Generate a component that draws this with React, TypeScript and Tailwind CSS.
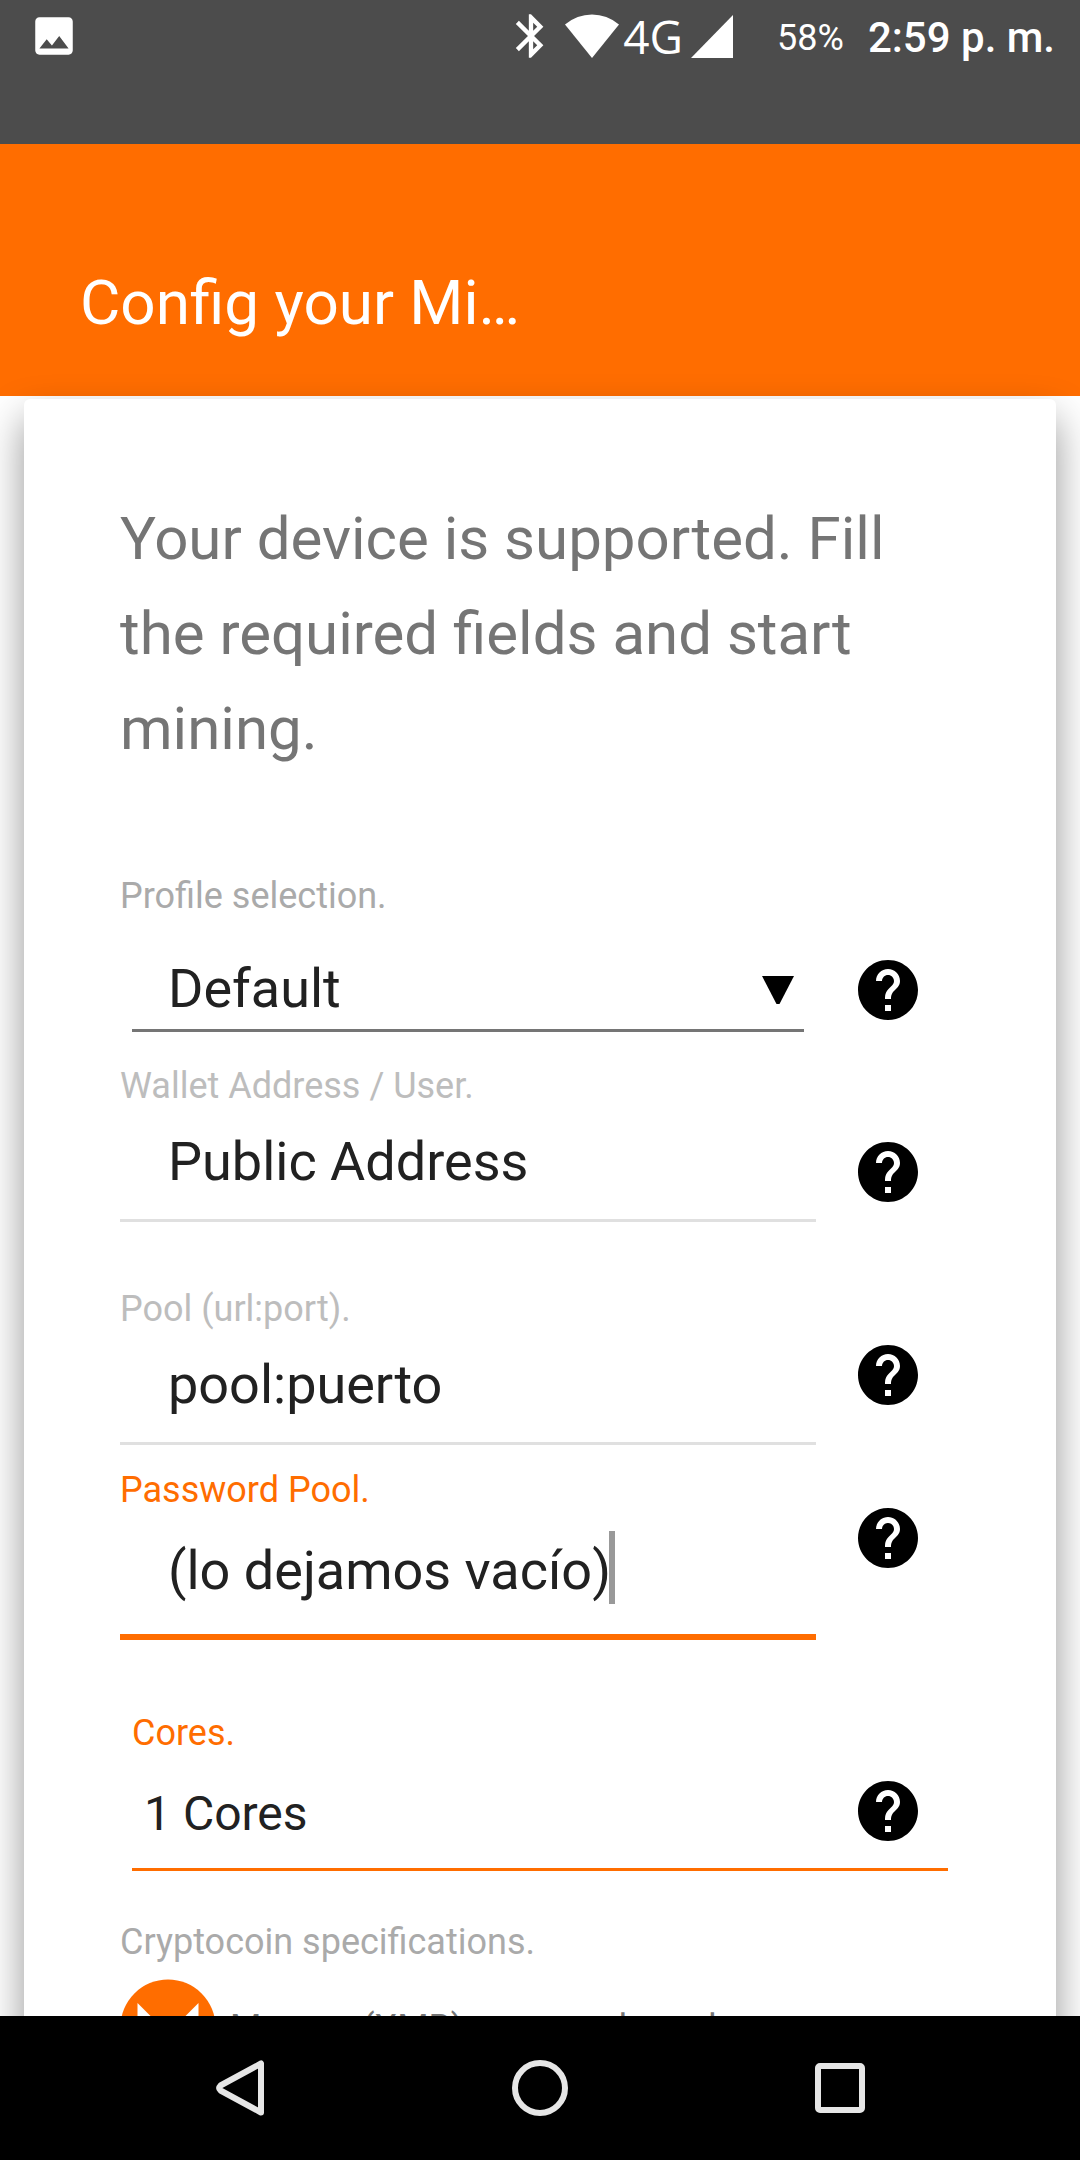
import type { ReactNode } from 'react';
import { MdBluetooth, MdHelp, MdImage } from 'react-icons/md';

const HelpButton = ({ label, className }: { label: string; className: string }) => (
	<button type="button" aria-label={`Help: ${label}`} className={`size-18 shrink-0 ${className}`}>
		<MdHelp className="size-full text-black" />
	</button>
);

type FieldProps = {
	id: string;
	label: string;
	labelColor: string;
	helpClass: string;
	className: string;
	children: ReactNode;
};

const Field = ({ id, label, labelColor, helpClass, className, children }: FieldProps) => (
	<div className={`flex items-end ${className}`}>
		<div className="min-w-0 flex-1">
			<label htmlFor={id} className={`block text-[36px] leading-12 ${labelColor}`}>
				{label}
			</label>
			{children}
		</div>
		<HelpButton label={label} className={helpClass} />
	</div>
);

const StatusBar = () => (
	<header className="h-36 shrink-0 bg-[#4c4c4c] text-white">
		<div className="flex h-18 items-center pr-[25px] pl-[29px]">
			<MdImage className="size-[50px]" />
			<MdBluetooth className="ml-auto size-[52px]" />
			<svg viewBox="0 0 54 44" className="ml-2 h-11 w-[54px]" fill="currentColor">
				<path d="M27 44L0 10.500Q12 .5 27 .5T54 10.500z" />
			</svg>
			<span className="ml-1 font-['Open_Sans'] text-[46px] leading-12">4G</span>
			<svg viewBox="0 0 42 43" className="ml-2 h-[43px] w-[42px]" fill="currentColor">
				<path d="M42 0V43H0z" />
			</svg>
			<div className="ml-11 flex items-center gap-6 pt-1 leading-12">
				<span className="text-[36px]">58%</span>
				<span className="text-[42px] font-medium">2:59 p. m.</span>
			</div>
		</div>
	</header>
);

const NavBar = () => (
	<nav className="relative z-10 flex h-36 shrink-0 items-center justify-around bg-black px-[90px]">
		<button type="button" aria-label="Back" className="size-14">
			<svg viewBox="0 0 56 56" fill="none" stroke="#e6e6e6" strokeWidth="6" strokeLinejoin="round">
				<path d="M49 3.500V52.500L8.500 30.500Q6 28 8.500 25.500z" />
			</svg>
		</button>
		<button type="button" aria-label="Home" className="size-14">
			<svg viewBox="0 0 56 56" fill="none" stroke="#e6e6e6" strokeWidth="6">
				<circle cx="28" cy="28" r="25" />
			</svg>
		</button>
		<button type="button" aria-label="Recent apps" className="size-14">
			<svg viewBox="0 0 56 56" fill="none" stroke="#e6e6e6" strokeWidth="6">
				<rect x="6" y="6" width="44" height="44" rx="2" />
			</svg>
		</button>
	</nav>
);

const inputClass =
	'block h-28 w-full border-b-3 border-[#e0e0e0] bg-transparent pb-1.5 pl-12 text-[54px] text-[#212121] outline-none';

export default function App() {
	return (
		<div className="flex h-screen flex-col overflow-hidden bg-white font-[Roboto,sans-serif]">
			<StatusBar />
			<div className="flex h-63 shrink-0 items-end bg-[#ff6d00] px-20 pb-[57px]">
				<h1 className="text-[62px] leading-18 text-white">Config your Mi…</h1>
			</div>

			<main className="min-h-0 flex-1 px-6 pt-[3px]">
				<form className="rounded-md bg-white px-24 pt-23 pb-24 shadow-[0_20px_40px_rgba(0,0,0,0.42)]">
					<p className="text-[60px] leading-[95px] text-[#757575]">
						Your device is supported. Fill the required fields and start mining.
					</p>

					<Field
						id="profile"
						label="Profile selection."
						labelColor="text-[#aaaaaa]"
						helpClass="mx-9 mb-1.5"
						className="mt-24"
					>
						<div className="relative mx-3">
							<select
								id="profile"
								className="block h-28 w-full appearance-none border-b-3 border-[#757575] bg-transparent pt-7 pl-9 text-[54px] text-[#212121] outline-none"
							>
								<option>Default</option>
							</select>
							<svg viewBox="0 0 32 28" className="pointer-events-none absolute right-2.5 bottom-7 h-7 w-8">
								<path d="M0 0H32L17.500 28H14.500z" />
							</svg>
						</div>
					</Field>

					<Field
						id="wallet"
						label="Wallet Address / User."
						labelColor="text-[#bdbdbd]"
						helpClass="mx-9 mb-3.5"
						className="mt-[30px]"
					>
						<input id="wallet" type="text" defaultValue="Public Address" className={inputClass} />
					</Field>

					<Field
						id="pool"
						label="Pool (url:port)."
						labelColor="text-[#bdbdbd]"
						helpClass="mx-9 mb-[34px]"
						className="mt-[63px]"
					>
						<input id="pool" type="text" defaultValue="pool:puerto" className={inputClass} />
					</Field>

					<Field
						id="password"
						label="Password Pool."
						labelColor="text-[#ff6d00]"
						helpClass="mx-9 mb-[66px]"
						className="mt-[21px]"
					>
						<div className="relative">
							<input
								id="password"
								type="text"
								defaultValue="(lo dejamos vacío)"
								className="block h-[126px] w-full border-b-6 border-[#ff6d00] bg-transparent pb-2 pl-12 text-[54px] text-[#212121] outline-none"
							/>
							{/* thick caret after the value */}
							<span className="absolute top-[17px] left-[489px] h-[73px] w-1.5 bg-[#999999]" />
						</div>
					</Field>

					<Field
						id="cores"
						label="Cores."
						labelColor="text-[#ff6d00]"
						helpClass="mr-6 ml-9 mb-[21px]"
						className="mx-3 mt-[69px] border-b-3 border-[#ff6d00]"
					>
						<select
							id="cores"
							className="block h-[111px] w-full appearance-none bg-transparent pt-0.5 pl-3 text-[48px] text-[#212121] outline-none"
						>
							<option>1 Cores</option>
						</select>
					</Field>

					<h2 className="mt-[47px] text-[36px] leading-12 text-[#aaaaaa]">Cryptocoin specifications.</h2>
					<div className="mt-[13px] flex items-center gap-3.5">
						<svg viewBox="0 0 96 96" className="size-24 shrink-0">
							<circle cx="48" cy="48" r="47.500" fill="#ff6d00" />
							<path d="M17.500 24L48 54.500 78.500 24V67H96V96H0V67H17.500z" fill="#fff" />
						</svg>
						<span className="pt-0.5 text-[36px] leading-12 text-[#757575]">Monero (XMR) currency based</span>
					</div>
				</form>
			</main>

			<NavBar />
		</div>
	);
}
